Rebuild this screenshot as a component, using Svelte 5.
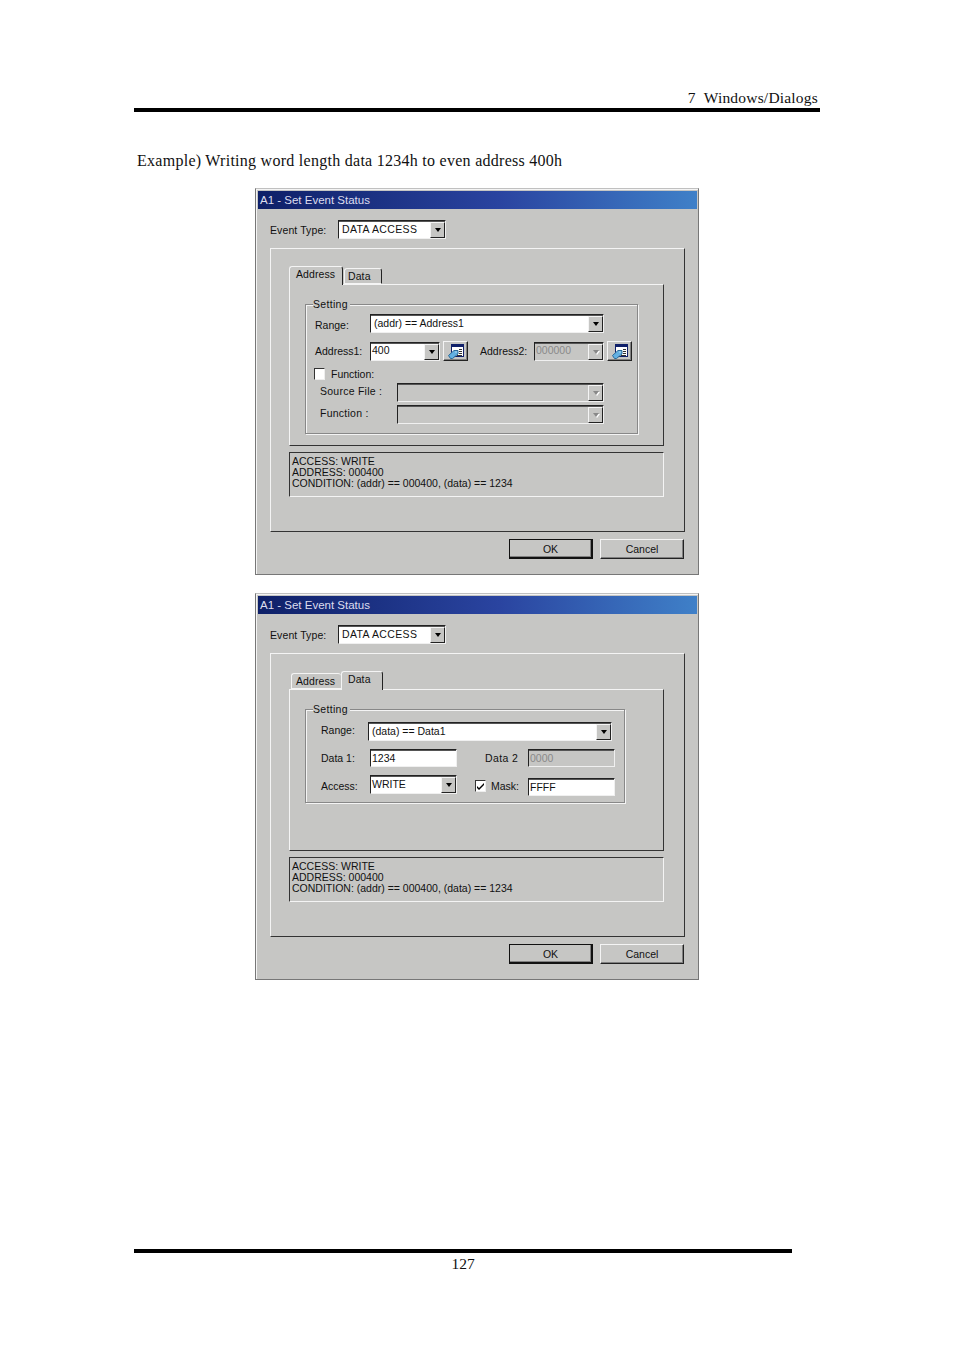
<script>
  const status = ['ACCESS: WRITE', 'ADDRESS: 000400', 'CONDITION: (addr) == 000400, (data) == 1234'];
</script>

{#snippet combo(text, cls = '', off = false)}
  <div class="field combo {cls}" class:off>
    <span class="value">{text}</span>
    <span class="drop"><i></i></span>
  </div>
{/snippet}

{#snippet pick()}
  <button class="raised pick" type="button" aria-label="Browse">
    <svg width="16" height="16" viewBox="0 0 16 16">
      <rect x="3.5" y="1.5" width="12" height="12" fill="#fff" stroke="#10206a" />
      <rect x="3" y="1" width="13" height="3" fill="#10206a" />
      <path d="M11 6.5h3M11 8.5h3M11 10.5h3M9 12.5h5" stroke="#333" />
      <path d="M.5 12.5 6 7.5h4V11l-5.5 4.500H2.500Z" fill="#62b0e2" stroke="#2a6a98" />
      <rect x="7.500" y="8.500" width="1" height="1" fill="#fff" />
    </svg>
  </button>
{/snippet}

{#snippet dialog(active, group)}
  <section class="dialog">
    <header class="title">A1 - Set Event Status</header>
    <div class="event-row">
      <span class="event-label">Event Type:</span>
      {@render combo('DATA ACCESS', 'event')}
    </div>
    <div class="panel">
      <div class="tabs {active}">
        <span class="tab tab-address" class:on={active === 'address'}>Address</span>
        <span class="tab tab-data" class:on={active === 'data'}>Data</span>
      </div>
      <div class="tab-body">
        {@render group()}
      </div>
      <div class="status">
        {#each status as line}
          <div>{line}</div>
        {/each}
      </div>
    </div>
    <div class="actions">
      <button class="raised default" type="button">OK</button>
      <button class="raised" type="button">Cancel</button>
    </div>
  </section>
{/snippet}

{#snippet addressGroup()}
  <div class="group group-address">
    <span class="legend">Setting</span>
    <div class="row">
      <span class="lbl w55 down">Range:</span>
      {@render combo('(addr) == Address1', 'w234 wide')}
    </div>
    <div class="row gap8">
      <span class="lbl w55">Address1:</span>
      {@render combo('400', 'w70')}
      {@render pick()}
      <span class="lbl w54 ml12">Address2:</span>
      {@render combo('000000', 'w70', true)}
      {@render pick()}
    </div>
    <div class="row check-row">
      <span class="check"></span>
      <span class="lbl">Function:</span>
    </div>
    <div class="row gap3 indent">
      <span class="lbl w77 up">Source File :</span>
      {@render combo('', 'w207', true)}
    </div>
    <div class="row gap3 indent">
      <span class="lbl w77 up">Function :</span>
      {@render combo('', 'w207', true)}
    </div>
  </div>
{/snippet}

{#snippet dataGroup()}
  <div class="group group-data">
    <span class="legend">Setting</span>
    <div class="row">
      <span class="lbl w47 up">Range:</span>
      {@render combo('(data) == Data1', 'w244 wide')}
    </div>
    <div class="row gap8">
      <span class="lbl w49">Data 1:</span>
      <div class="field input w87"><span class="value">1234</span></div>
      <span class="lbl w43 ml28 loose">Data 2</span>
      <div class="field input w87 off"><span class="value">0000</span></div>
    </div>
    <div class="row gap8 access-row">
      <span class="lbl w49">Access:</span>
      {@render combo('WRITE', 'w87')}
      <span class="check checked">
        <svg width="9" height="9" viewBox="0 0 9 9"><path d="M1 4l2 2 5-5v2L3 8 1 6Z" fill="#000" /></svg>
      </span>
      <span class="lbl w37">Mask:</span>
      <div class="field input w87 mask"><span class="value">FFFF</span></div>
    </div>
  </div>
{/snippet}

<main class="page">
  <div class="running-head">7&nbsp; Windows/Dialogs</div>
  <div class="rule"></div>
  <p class="lead">Example) Writing word length data 1234h to even address 400h</p>

  <div class="dialogs">
    {@render dialog('address', addressGroup)}
    {@render dialog('data', dataGroup)}
  </div>

  <div class="foot-rule"></div>
  <div class="page-no">127</div>
</main>

<style>
  :global(body) {
    margin: 0;
    background: #fff;
  }

  .page {
    width: 954px;
    height: 1350px;
    padding: 89px 0 0 134px;
    box-sizing: border-box;
    font-family: 'Liberation Serif', serif;
    color: #111;
    overflow: hidden;
  }

  .page * {
    box-sizing: border-box;
  }

  .running-head {
    width: 684px;
    height: 19px;
    text-align: right;
    font-size: 15.5px;
    line-height: 17px;
    letter-spacing: 0.2px;
  }

  .rule {
    width: 686px;
    height: 4px;
    background: #000;
  }

  .lead {
    margin: 39px 0 0 3px;
    height: 20px;
    font-size: 16px;
    line-height: 20px;
    letter-spacing: 0.27px;
  }

  .dialogs {
    margin: 17px 0 0 121px;
    display: flex;
    flex-direction: column;
    gap: 18px;
    font-family: 'Liberation Sans', sans-serif;
    font-size: 10.5px;
    color: #111;
  }

  .dialog {
    width: 444px;
    height: 387px;
    padding: 2px 1px 0 2px;
    background: #c6c6c4;
    border: 1px solid #777;
    border-top-color: #c0c0c0;
    box-shadow: inset 1px 1px 0 #f4f4f4;
  }

  .title {
    height: 18px;
    padding-left: 2px;
    background: linear-gradient(90deg, #0e2068 0%, #2a44a0 55%, #3f80c8 100%);
    color: #dde;
    font-size: 11.5px;
    line-height: 18px;
  }

  .event-row {
    display: flex;
    align-items: center;
    height: 19px;
    margin: 11px 0 0 12px;
  }

  .event-label {
    width: 68px;
    letter-spacing: 0.1px;
  }

  .panel {
    width: 415px;
    height: 284px;
    margin: 9px 0 0 12px;
    padding-left: 18px;
    border: 1px solid;
    border-color: #f4f4f4 #333 #333 #f4f4f4;
  }

  .tabs {
    display: flex;
    align-items: flex-end;
    height: 18px;
    margin-top: 17px;
    position: relative;
    z-index: 1;
  }

  .tab {
    display: block;
    height: 16px;
    padding-left: 3px;
    line-height: 15px;
    background: #c6c6c4;
    border: 1px solid;
    border-color: #f4f4f4 #222 #f4f4f4 #f4f4f4;
    border-radius: 3px 3px 0 0;
    letter-spacing: 0.1px;
  }

  .tab.on {
    height: 19px;
    margin-bottom: -1px;
    line-height: 14px;
    border-bottom: 0;
  }

  .tabs.address .tab-address {
    width: 54px;
    padding-left: 6px;
  }

  .tabs.address .tab-data {
    width: 38px;
    margin-left: 1px;
  }

  .tabs.data .tab-address {
    width: 50px;
    margin-left: 2px;
    padding-left: 4px;
    border-right: 0;
  }

  .tabs.data .tab-data {
    width: 42px;
    padding-left: 6px;
  }

  .tab-body {
    width: 375px;
    height: 162px;
    padding: 19px 0 0 15px;
    border: 1px solid;
    border-color: #f4f4f4 #333 #333 #f4f4f4;
  }

  .group {
    position: relative;
    border: 1px solid #888;
    box-shadow: 1px 1px 0 #f4f4f4, inset 1px 1px 0 #f4f4f4;
  }

  .group-address {
    width: 333px;
    height: 130px;
    padding: 9px 0 0 9px;
  }

  .group-data {
    width: 320px;
    height: 94px;
    padding: 12px 0 0 15px;
  }

  .legend {
    position: absolute;
    top: -7px;
    left: 7px;
    padding: 0 2px 0 0;
    background: #c6c6c4;
    line-height: 13px;
    letter-spacing: 0.3px;
  }

  .row {
    display: flex;
    align-items: center;
  }

  .gap8 {
    margin-top: 8px;
  }

  .gap3 {
    margin-top: 3px;
  }

  .indent {
    margin-left: 5px;
  }

  .indent .lbl {
    letter-spacing: 0.25px;
  }

  .loose {
    letter-spacing: 0.4px;
  }

  .check-row {
    height: 12px;
    margin-top: 7px;
  }

  .check {
    display: flex;
    align-items: center;
    justify-content: center;
    width: 11px;
    height: 12px;
    margin: 0 6px 0 -1px;
    background: #fff;
    border: 1px solid;
    border-color: #333 #eee #eee #333;
  }

  .access-row {
    align-items: flex-start;
  }

  .access-row .lbl {
    margin-top: 5px;
  }

  .check.checked {
    margin: 5px 5px 0 18px;
  }

  .lbl {
    flex: none;
  }

  .up {
    margin-bottom: 4px;
  }

  .down {
    margin-top: 2px;
  }

  .w37 { width: 37px; }
  .w43 { width: 43px; }
  .w47 { width: 47px; }
  .w49 { width: 49px; }
  .w54 { width: 54px; }
  .w55 { width: 55px; }
  .w77 { width: 77px; }
  .ml12 { margin-left: 12px; }
  .ml28 { margin-left: 28px; }

  .field {
    flex: none;
    position: relative;
    display: flex;
    align-items: center;
    height: 19px;
    padding-left: 1px;
    background: #fff;
    border: 1px solid;
    border-color: #222 #f0f0f0 #f0f0f0 #222;
    box-shadow: inset 0 1px 0 #555;
    line-height: 14px;
    overflow: hidden;
  }

  .field.off {
    background: #c6c6c4;
    color: #8a8a8a;
  }

  .combo .value {
    padding-bottom: 2px;
  }

  .wide .value {
    padding-left: 2px;
  }

  .input {
    height: 18px;
  }

  .input.mask {
    margin-top: 3px;
  }

  .event { width: 108px; }
  .event .value {
    padding-left: 2px;
    letter-spacing: 0.35px;
  }
  .w70 { width: 70px; }
  .w87 { width: 87px; }
  .w207 { width: 207px; }
  .w234 { width: 234px; }
  .w244 { width: 244px; }

  .drop {
    position: absolute;
    top: 1px;
    right: 0;
    width: 15px;
    height: 16px;
    display: flex;
    align-items: center;
    justify-content: center;
    background: #c6c6c4;
    border: 1px solid;
    border-color: #f4f4f4 #222 #222 #f4f4f4;
  }

  .drop i {
    width: 0;
    height: 0;
    border-left: 3.5px solid transparent;
    border-right: 3.5px solid transparent;
    border-top: 4px solid #000;
  }

  .off .drop i {
    border-top-color: #888;
    filter: drop-shadow(1px 1px 0 #fff);
  }

  .raised {
    display: block;
    padding: 0;
    background: #c6c6c4;
    border: 1px solid;
    border-color: #f4f4f4 #222 #222 #f4f4f4;
    box-shadow: inset -1px -1px 0 #808080;
    font: inherit;
    color: inherit;
  }

  .pick {
    flex: none;
    display: flex;
    align-items: center;
    justify-content: center;
    width: 25px;
    height: 20px;
    margin-left: 3px;
  }

  .actions {
    display: flex;
    justify-content: flex-end;
    gap: 7px;
    width: 426px;
    margin-top: 7px;
  }

  .actions .raised {
    width: 84px;
    height: 20px;
  }

  .default {
    outline: 1px solid #111;
    outline-offset: -1px;
    border-width: 1px 2px 2px 1px;
    border-color: #111;
  }

  .status {
    width: 375px;
    height: 45px;
    margin-top: 6px;
    padding: 3px 0 0 2px;
    border: 1px solid;
    border-color: #333 #f4f4f4 #f4f4f4 #333;
    line-height: 11px;
  }

  .foot-rule {
    width: 658px;
    height: 4px;
    margin-top: 269px;
    background: #000;
  }

  .page-no {
    width: 658px;
    text-align: center;
    font-size: 15.5px;
    line-height: 22px;
  }
</style>
